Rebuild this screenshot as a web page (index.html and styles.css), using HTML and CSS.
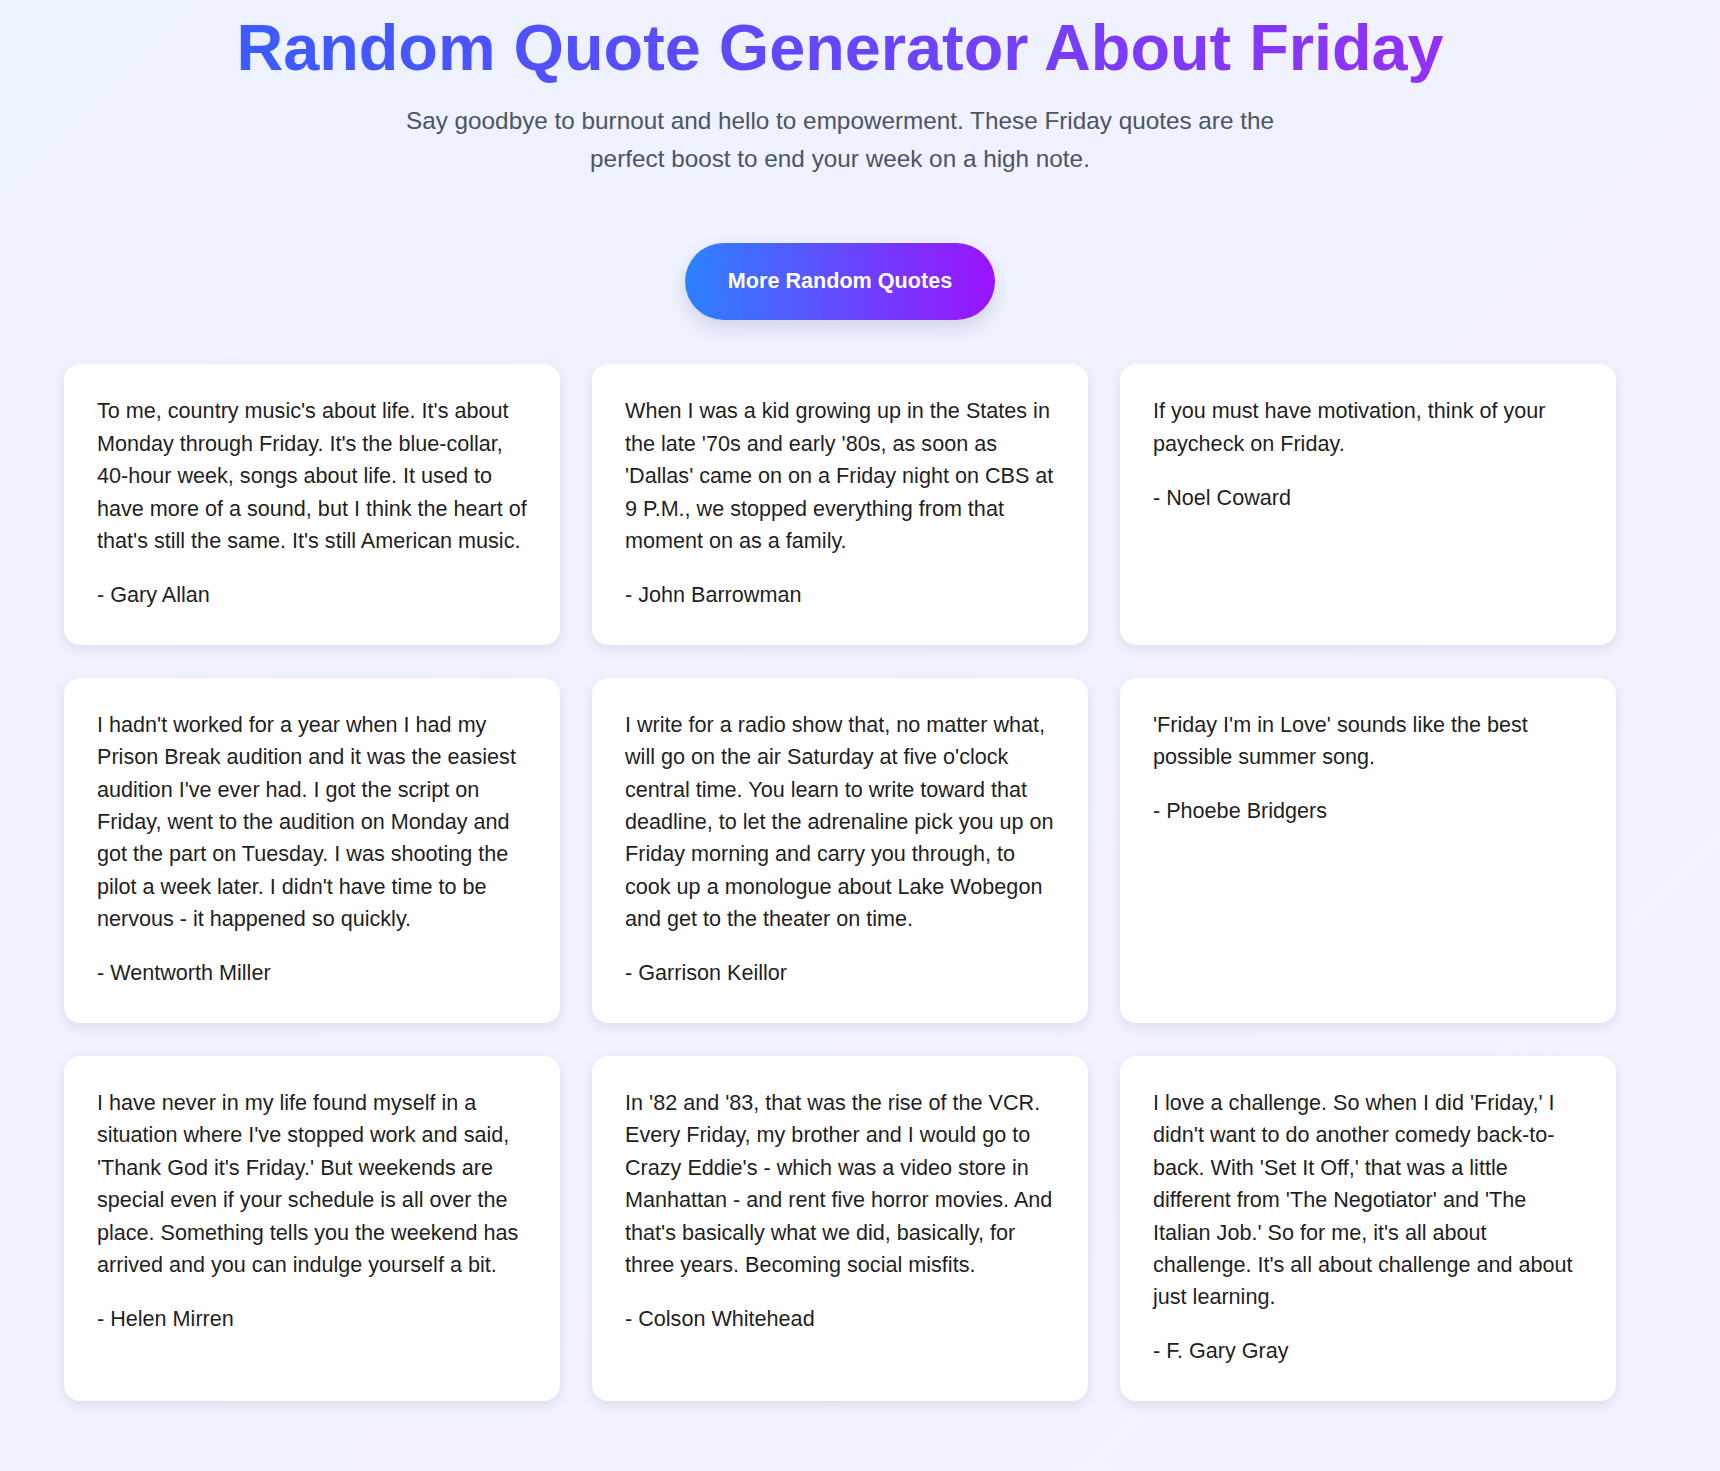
FILE: index.html
```html
<html>
<head>
<meta charset="UTF-8">
<link rel="stylesheet" href="styles.css">
</head>
<body>
<div class="page">
  <header class="header">
    <h1 class="title"><span>Random Quote Generator About Friday</span></h1>
    <p class="intro">Say goodbye to burnout and hello to empowerment. These Friday quotes are the perfect boost to end your week on a high note.</p>
    <button class="more" id="more">More Random Quotes</button>
  </header>

  <!-- quote cards -->
  <div class="quotes">
    <div class="quote">
      <p class="text">To me, country music's about life. It's about Monday through Friday. It's the blue-collar, 40-hour week, songs about life. It used to have more of a sound, but I think the heart of that's still the same. It's still American music.</p>
      <p class="author">- Gary Allan</p>
    </div>
    <div class="quote">
      <p class="text">When I was a kid growing up in the States in the late '70s and early '80s, as soon as 'Dallas' came on on a Friday night on CBS at 9 P.M., we stopped everything from that moment on as a family.</p>
      <p class="author">- John Barrowman</p>
    </div>
    <div class="quote">
      <p class="text">If you must have motivation, think of your paycheck on Friday.</p>
      <p class="author">- Noel Coward</p>
    </div>
    <div class="quote">
      <p class="text">I hadn't worked for a year when I had my Prison Break audition and it was the easiest audition I've ever had. I got the script on Friday, went to the audition on Monday and got the part on Tuesday. I was shooting the pilot a week later. I didn't have time to be nervous - it happened so quickly.</p>
      <p class="author">- Wentworth Miller</p>
    </div>
    <div class="quote">
      <p class="text">I write for a radio show that, no matter what, will go on the air Saturday at five o'clock central time. You learn to write toward that deadline, to let the adrenaline pick you up on Friday morning and carry you through, to cook up a monologue about Lake Wobegon and get to the theater on time.</p>
      <p class="author">- Garrison Keillor</p>
    </div>
    <div class="quote">
      <p class="text">'Friday I'm in Love' sounds like the best possible summer song.</p>
      <p class="author">- Phoebe Bridgers</p>
    </div>
    <div class="quote">
      <p class="text">I have never in my life found myself in a situation where I've stopped work and said, 'Thank God it's Friday.' But weekends are special even if your schedule is all over the place. Something tells you the weekend has arrived and you can indulge yourself a bit.</p>
      <p class="author">- Helen Mirren</p>
    </div>
    <div class="quote">
      <p class="text">In '82 and '83, that was the rise of the VCR. Every Friday, my brother and I would go to Crazy Eddie's - which was a video store in Manhattan - and rent five horror movies. And that's basically what we did, basically, for three years. Becoming social misfits.</p>
      <p class="author">- Colson Whitehead</p>
    </div>
    <div class="quote">
      <p class="text">I love a challenge. So when I did 'Friday,' I didn't want to do another comedy back-to-back. With 'Set It Off,' that was a little different from 'The Negotiator' and 'The Italian Job.' So for me, it's all about challenge. It's all about challenge and about just learning.</p>
      <p class="author">- F. Gary Gray</p>
    </div>
  </div>
</div>
</body>
</html>
```

FILE: styles.css
```css
html {
  min-height: 100%;
  background: linear-gradient(135deg, #edf2ff 0%, #f1f2fe 60%, #f4f1fd 100%);
}

body {
  margin: 0;
  font-family: "Liberation Sans", Arial, sans-serif;
  color: #1f1f1f;
}

.page {
  max-width: 1680px;
  padding: 0 64px 68px;
  box-sizing: border-box;
}

/* Header */
.header {
  text-align: center;
}

.title {
  margin: 12px 0 0;
  font-size: 64.8px;
  line-height: 1.12;
  font-weight: bold;
}

.title span {
  background: linear-gradient(90deg, #3a5cff, #9330f7);
  -webkit-background-clip: text;
  background-clip: text;
  color: transparent;
}

.intro {
  max-width: 900px;
  margin: 17.6px auto 0;
  font-size: 24.3px;
  line-height: 37.4px;
  color: #4b5563;
}

.more {
  margin: 65.6px 0 0;
  padding: 25.9px 43.2px;
  border: none;
  border-radius: 40px;
  background: linear-gradient(90deg, #2c82ff, #9b12fe);
  color: #fff;
  font-family: inherit;
  font-size: 21.6px;
  font-weight: bold;
  line-height: normal;
  cursor: pointer;
  box-shadow: 0 8px 18px rgba(70, 80, 140, 0.18);
}

/* Quote grid */
.quotes {
  display: grid;
  grid-template-columns: repeat(3, 1fr);
  column-gap: 32px;
  row-gap: 33px;
  margin-top: 44px;
}

.quote {
  background: #fff;
  border-radius: 16px;
  padding: 31px 33px 33.5px;
  box-shadow: 0 4px 12px rgba(40, 50, 90, 0.1);
  font-size: 21.6px;
  line-height: 1.5;
}

.quote p {
  margin: 0;
}

.quote .text {
  margin-bottom: 21.6px;
}
```
